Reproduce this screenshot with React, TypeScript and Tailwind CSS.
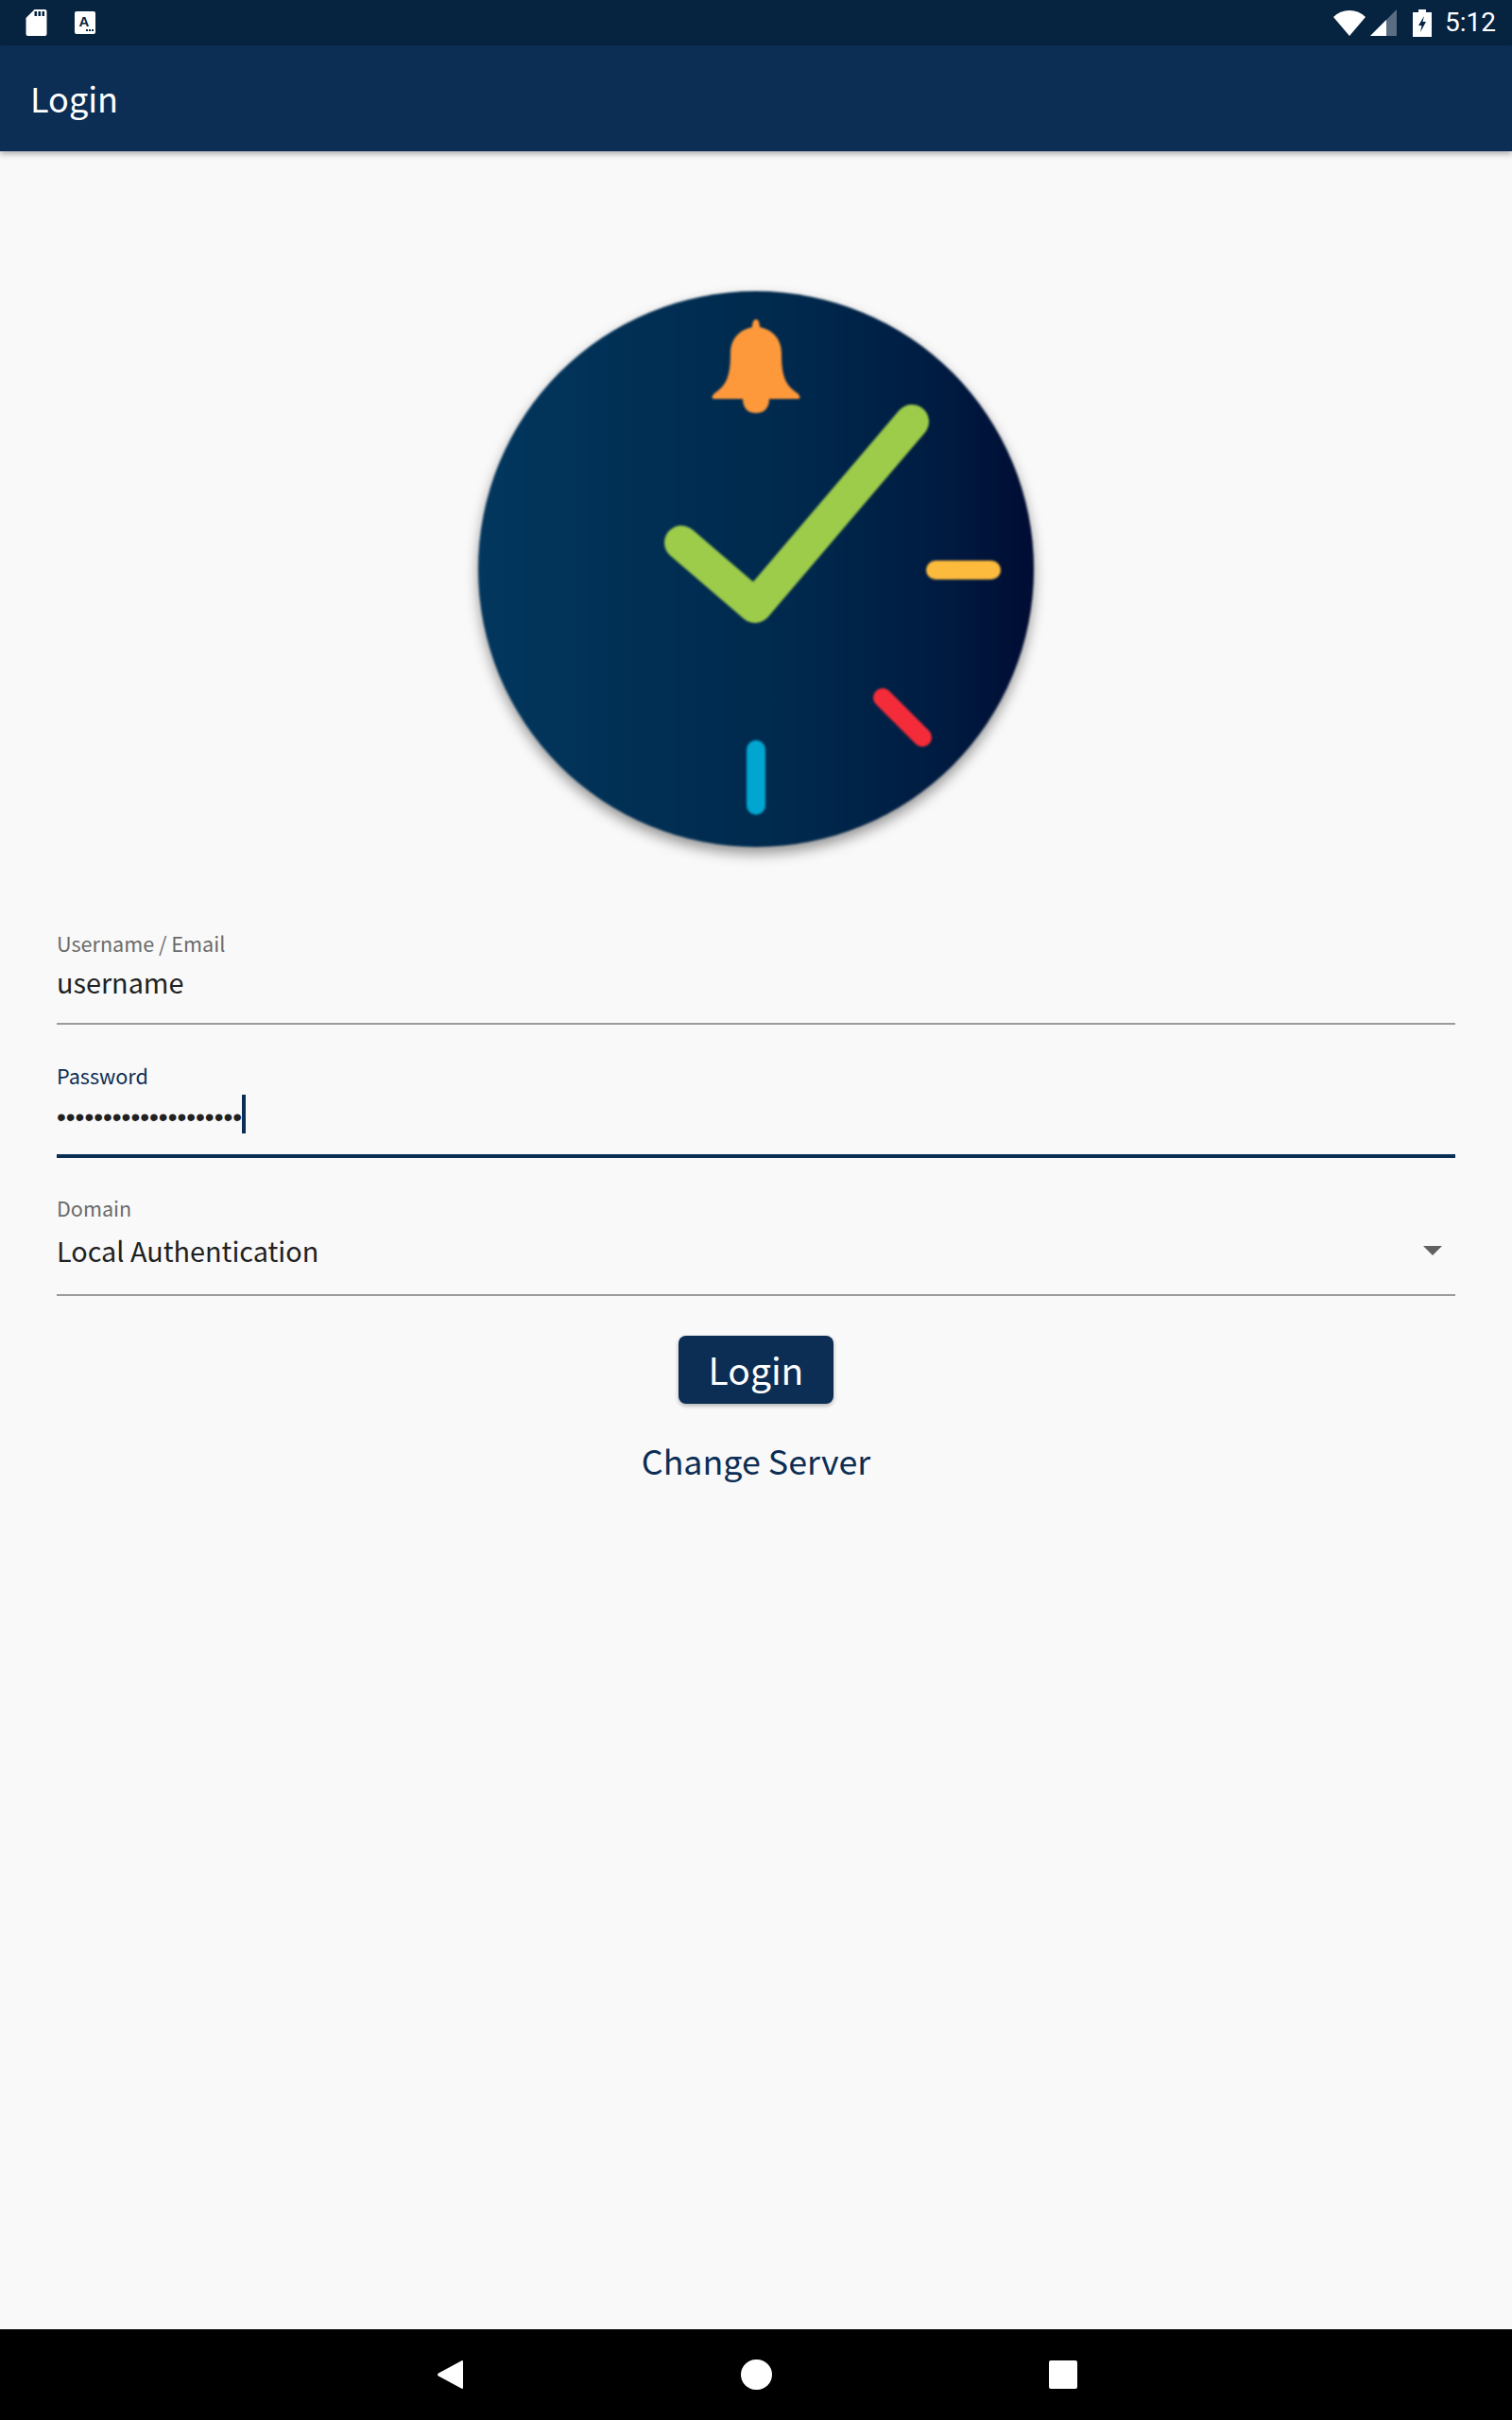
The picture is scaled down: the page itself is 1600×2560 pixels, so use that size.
const sans = "font-['Noto_Sans_CJK_SC','Noto_Sans',sans-serif]"

const Logo = () => (
  <svg viewBox="0 0 600 600" className="w-[600px] h-[600px] blur-[1px] drop-shadow-[0_7px_7px_rgba(0,0,0,0.4)]">
    <defs>
      <linearGradient id="face" x1="0" x2="1" y1="0" y2="0">
        <stop offset="0" stopColor="#03375e" />
        <stop offset="0.3" stopColor="#012f54" />
        <stop offset="0.6" stopColor="#00284c" />
        <stop offset="0.85" stopColor="#001a40" />
        <stop offset="1" stopColor="#000c33" />
      </linearGradient>
    </defs>
    <circle cx="300" cy="300" r="294" fill="url(#face)" />
    <path
      d="M296 44C296 33 304 33 304 44C318 47 327 57 327 72C327 95 331 106 344 114Q349 120 344 120H314C314 131 307 135 300 135C293 135 286 131 286 120H256Q251 120 256 114C269 106 273 95 273 72C273 57 282 47 296 44Z"
      fill="#fe993b"
    />
    <path d="M221 272L299 339L465 144" fill="none" stroke="#9dcb4a" strokeWidth="36" strokeLinecap="round" strokeLinejoin="round" />
    <path d="M490 301H549" stroke="#fdbb3d" strokeWidth="20" strokeLinecap="round" />
    <path d="M434 436L476 478" stroke="#f42c39" strokeWidth="20" strokeLinecap="round" />
    <path d="M300 491V550" stroke="#00a5d0" strokeWidth="20" strokeLinecap="round" />
  </svg>
)

const StatusBar = () => (
  <div className="h-12 bg-[#062340] flex items-center text-white shrink-0">
    <svg viewBox="0 0 22 28" className="w-[23px] h-[28px] ml-[27px]">
      <path d="M9 0H20Q22 0 22 2V26Q22 28 20 28H2Q0 28 0 26V9Z" fill="#fff" />
      <path d="M9 2h2.5v5H9zM13 2h2.5v5H13zM17 2h2.5v5H17z" fill="#062340" />
    </svg>
    <svg viewBox="0 0 22 24" className="w-[22px] h-6 ml-[29px]">
      <rect width="22" height="24" rx="2" fill="#fff" />
      <text x="10" y="16" textAnchor="middle" fontSize="15" fontWeight="700" fontFamily="Liberation Sans" fill="#062340">A</text>
      <path d="M12 19h2v2h-2zM15 19h2v2h-2zM18 19h2v2h-2z" fill="#062340" />
    </svg>
    <div className="ml-auto flex items-center">
      <svg viewBox="0 0 34 27" className="w-[34px] h-[27px]">
        <path d="M17 27L0 7Q7 0 17 0T34 7Z" fill="#fff" />
      </svg>
      <svg viewBox="0 0 28 28" className="w-7 h-7 ml-[5px]">
        <path d="M28 0V28H0Z" fill="#5a6d83" />
        <path d="M17 11V28H0Z" fill="#fff" />
      </svg>
      <svg viewBox="0 0 20 29" className="w-5 h-[29px] ml-[17px]">
        <path d="M6 0H14V3H20V29H0V3H6Z" fill="#fff" />
        <path d="M12 7L6 17H9.5L8 24L14 13H10.5Z" fill="#062340" />
      </svg>
      <span className="font-['Roboto',sans-serif] text-[28px] leading-none ml-[14px] mr-[17px]">5:12</span>
    </div>
  </div>
)

const Field = ({ label, active, children, className }: { label: string; active?: boolean; children: React.ReactNode; className: string }) => (
  <div className={`${className} ${active ? "border-b-4 border-[#0c2e55]" : "border-b-2 border-[#9b9b9b]"}`}>
    <div className={`text-[21.6px] leading-[30px] ${active ? "text-[#0c2e55]" : "text-[#6b6b6b]"}`}>{label}</div>
    {children}
  </div>
)

export default function App() {
  return (
    <div className={`w-[1600px] h-[2560px] flex flex-col bg-[#f9f9f9] ${sans}`}>
      <StatusBar />
      <div className="h-28 bg-[#0c2e55] flex items-center px-8 pb-[3px] text-white text-[36px] shadow-[0_3px_6px_rgba(0,0,0,0.3)] shrink-0">
        Login
      </div>

      <main className="flex-1 flex flex-col items-center pt-[142px] px-[60px]">
        <Logo />

        <div className="w-full mt-[81px] flex flex-col">
          <Field label="Username / Email" className="h-[101px]">
            <div className="text-[28.8px] leading-[50px] pt-[1px] text-[#212121]">username</div>
          </Field>

          <Field label="Password" active className="h-[102px] mt-[39px]">
            <div className="flex items-center h-[44px] mt-[3px]">
              <span className="font-['Liberation_Sans',sans-serif] text-[28px] leading-none pt-[8px] text-[#212121]">••••••••••••••••••••</span>
              <span className="w-1 h-[41px] bg-[#0c2e55]" />
            </div>
          </Field>

          <Field label="Domain" className="h-[108px] mt-[38px]">
            <div className="flex items-center justify-between h-[60px] pr-[14px]">
              <span className="text-[28.8px] text-[#212121]">Local Authentication</span>
              <svg viewBox="0 0 20 10" className="w-5 h-[10px]">
                <path d="M0 0H20L10 10Z" fill="#616161" />
              </svg>
            </div>
          </Field>
        </div>

        <button className="mt-[42px] w-[164px] h-[72px] pb-[2px] rounded-lg bg-[#0c2e55] text-white text-[39px] leading-none shadow-[0_2px_4px_rgba(0,0,0,0.3)]">
          Login
        </button>
        <div className="mt-[39px] text-[#0c2e55] text-[35.8px] leading-[40px]">Change Server</div>
      </main>

      <div className="h-24 bg-black flex items-center shrink-0">
        <svg viewBox="0 0 28 32" className="w-7 h-8 ml-[462px]">
          <path d="M27 1L2 14.5Q0 16 2 17.5L27 31Q28 31 28 30V2Q28 1 27 1Z" fill="#fff" />
        </svg>
        <div className="w-[33px] h-8 rounded-full bg-white ml-[294px]" />
        <div className="w-[30px] h-[30px] rounded-[2px] bg-white ml-[293px]" />
      </div>
    </div>
  )
}
